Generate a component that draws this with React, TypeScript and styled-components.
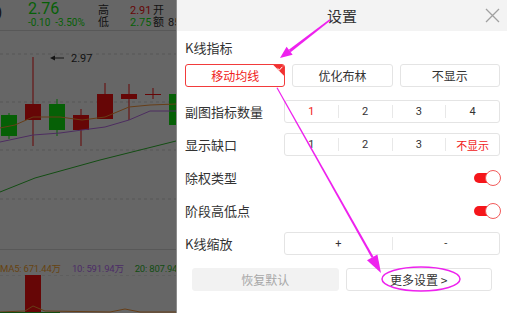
import React from 'react';
import styled, { createGlobalStyle } from 'styled-components';

const GlobalStyle = createGlobalStyle`
  html, body {
    margin: 0;
    padding: 0;
    background: #ffffff;
  }
  body {
    font-family: "Noto Sans CJK SC", "Noto Sans", sans-serif;
  }
`;

const Page = styled.div`
  position: relative;
  display: flex;
  flex-flow: row;
  width: 507px;
  height: 313px;
  overflow: hidden;
`;

/* ---------- chart side ---------- */

const ChartSide = styled.div`
  position: relative;
  width: 176px;
  flex-shrink: 0;
  display: flex;
  flex-flow: column;
  background: #ffffff;
  overflow: hidden;
  font-family: "Roboto", "Noto Sans CJK SC", sans-serif;
`;

const Dim = styled.div`
  position: absolute;
  inset: 0;
  background: rgba(0, 0, 0, 0.6);
`;

const Quote = styled.div`
  height: 31px;
  display: flex;
  flex-flow: row;
  border-bottom: 1px solid #dddddd;
  box-sizing: border-box;
  margin-left: -3px;
`;

const QuoteCol = styled.div<{ $w: number }>`
  width: ${p => p.$w}px;
  flex-shrink: 0;
  display: flex;
  flex-flow: column;
  white-space: nowrap;
`;

const QuoteText = styled.span<{ $color?: string; $size?: number; $h?: number }>`
  color: ${p => p.$color || '#333333'};
  font-size: ${p => p.$size || 11}px;
  line-height: ${p => p.$h || 12}px;
`;

const MainChart = styled.svg`
  display: block;
  width: 176px;
  height: 218px;
`;

const Legend = styled.div`
  height: 26px;
  display: flex;
  flex-flow: row;
  align-items: center;
  gap: 11px;
  padding-top: 10px;
  box-sizing: border-box;
  white-space: nowrap;
  font-size: 9.5px;
  letter-spacing: -0.2px;
  border-top: 1px solid #dddddd;
`;

const LegendItem = styled.span<{ $color: string }>`
  color: ${p => p.$color};
`;

const VolumeChart = styled.svg`
  display: block;
  width: 176px;
  height: 38px;
`;

/* ---------- settings panel ---------- */

const Panel = styled.div`
  width: 331px;
  flex-shrink: 0;
  display: flex;
  flex-flow: column;
  background: #ffffff;
  border-left: 1px solid #8c8c8c;
  box-sizing: border-box;
  color: #333333;
`;

const Header = styled.div`
  position: relative;
  height: 31px;
  background: #f3f3f3;
  display: flex;
  align-items: center;
  justify-content: center;
  font-size: 15px;
  color: #333333;
`;

const Close = styled.svg`
  position: absolute;
  right: 7px;
  top: 8px;
  width: 15px;
  height: 15px;
`;

const Body = styled.div`
  display: flex;
  flex-flow: column;
  padding: 8px 7px 0 8px;
`;

const SectionLabel = styled.div`
  font-size: 13px;
  line-height: 18px;
  height: 18px;
  margin-bottom: 7px;
`;

const ChoiceRow = styled.div`
  display: flex;
  flex-flow: row;
  gap: 7px;
  margin-bottom: 13px;
`;

const Choice = styled.div<{ $active?: boolean }>`
  position: relative;
  flex: 1;
  height: 23px;
  box-sizing: border-box;
  border: 1px solid ${p => (p.$active ? '#f23b3b' : '#e4e4e4')};
  border-radius: 3px;
  display: flex;
  align-items: center;
  justify-content: center;
  font-size: 12px;
  color: ${p => (p.$active ? '#f02020' : '#333333')};
  overflow: hidden;
`;

const Corner = styled.div`
  position: absolute;
  top: 0;
  right: 0;
  width: 11px;
  height: 11px;
  background: #f23030;
  clip-path: polygon(0 0, 100% 0, 100% 100%);
`;

const CornerCheck = styled.svg`
  position: absolute;
  top: 1px;
  right: 1px;
  width: 6px;
  height: 5px;
`;

const SettingRow = styled.div`
  display: flex;
  flex-flow: row;
  align-items: center;
  height: 23px;
  margin-bottom: 10px;
`;

const RowLabel = styled.div`
  width: 99px;
  flex-shrink: 0;
  font-size: 13px;
`;

const Segments = styled.div`
  flex: 1;
  height: 23px;
  box-sizing: border-box;
  border: 1px solid #e4e4e4;
  border-radius: 3px;
  display: flex;
  flex-flow: row;
  align-items: center;
`;

const Segment = styled.div<{ $active?: boolean; $first?: boolean }>`
  flex: 1;
  height: 13px;
  display: flex;
  align-items: center;
  justify-content: center;
  font-size: 11px;
  font-family: "Roboto", "Noto Sans CJK SC", sans-serif;
  color: ${p => (p.$active ? '#f02020' : '#333333')};
  border-left: ${p => (p.$first ? 'none' : '1px solid #e8e8e8')};
`;

const Spacer = styled.div`
  flex: 1;
`;

const Toggle = styled.div`
  position: relative;
  width: 27px;
  height: 16px;
  margin-right: -1px;
`;

const ToggleTrack = styled.div`
  position: absolute;
  left: 0;
  top: 3px;
  width: 22px;
  height: 10px;
  border-radius: 5px;
  background: #f5161b;
`;

const ToggleKnob = styled.div`
  position: absolute;
  right: 0;
  top: 0;
  width: 16px;
  height: 16px;
  box-sizing: border-box;
  border-radius: 50%;
  background: #ffffff;
  border: 1px solid #f25a5a;
`;

const Footer = styled.div`
  display: flex;
  flex-flow: row;
  gap: 7px;
  padding: 3px 15px 0 15px;
  margin-left: -8px;
  margin-right: -7px;
`;

const FooterButton = styled.div<{ $muted?: boolean }>`
  flex: 1;
  height: 23px;
  box-sizing: border-box;
  border-radius: 3px;
  border: 1px solid ${p => (p.$muted ? '#f2f2f2' : '#e4e4e4')};
  background: ${p => (p.$muted ? '#f2f2f2' : '#ffffff')};
  color: ${p => (p.$muted ? '#a8a8a8' : '#333333')};
  font-size: 12px;
  display: flex;
  align-items: center;
  justify-content: center;
`;

const Annotations = styled.svg`
  position: absolute;
  left: 0;
  top: 0;
  width: 507px;
  height: 313px;
  pointer-events: none;
`;

/* ---------- data ---------- */

const RED = '#ff1010';
const GREEN = '#10f010';

const candles = [
  { x: 1, top: 115, bottom: 136, hi: 113, lo: 139, c: GREEN },
  { x: 25, top: 104, bottom: 120, hi: 57, lo: 146, c: RED },
  { x: 49, top: 104, bottom: 130, hi: 99, lo: 136, c: GREEN },
  { x: 73, top: 115, bottom: 130, hi: 109, lo: 146, c: RED },
  { x: 97, top: 94, bottom: 119, hi: 83, lo: 119, c: RED },
  { x: 121, top: 94, bottom: 99, hi: 84, lo: 120, c: RED },
  { x: 145, top: 94, bottom: 95, hi: 88, lo: 99, c: RED },
  { x: 169, top: 94, bottom: 125, hi: 94, lo: 125, c: GREEN },
];

const ma5 = '0,128 15,125 33,117 60,117 82,120 105,117 129,107 150,105 176,104';
const ma10 = '0,142 33,135 60,133 82,130 105,127 129,120 150,111 176,111';
const ma20 = '0,192 35,178 100,160 140,150 176,141';

const Chart = () => (
  <ChartSide>
    <Quote>
      <QuoteCol $w={31}>
        <QuoteText $size={15} $h={24}>)</QuoteText>
      </QuoteCol>
      <QuoteCol $w={70}>
        <QuoteText $color={GREEN} $size={16} $h={17}>2.76</QuoteText>
        <QuoteText $color={GREEN} $size={10} $h={12}>-0.10&nbsp;&nbsp;-3.50%</QuoteText>
      </QuoteCol>
      <QuoteCol $w={32}>
        <QuoteText $h={12} style={{ marginTop: 5 }}>高</QuoteText>
        <QuoteText $h={12}>低</QuoteText>
      </QuoteCol>
      <QuoteCol $w={23}>
        <QuoteText $color={RED} $h={12} style={{ marginTop: 5 }}>2.91</QuoteText>
        <QuoteText $color={GREEN} $h={12}>2.75</QuoteText>
      </QuoteCol>
      <QuoteCol $w={15}>
        <QuoteText $h={12} style={{ marginTop: 5 }}>开</QuoteText>
        <QuoteText $h={12}>额</QuoteText>
      </QuoteCol>
      <QuoteCol $w={20}>
        <QuoteText $h={12} style={{ marginTop: 17 }}>85</QuoteText>
      </QuoteCol>
    </Quote>
    <MainChart viewBox="0 31 176 218">
      {[54, 102, 150, 199].map(y => (
        <line key={y} x1={0} x2={176} y1={y} y2={y} stroke="#d8d8d8" strokeWidth={1} strokeDasharray="3 3" />
      ))}
      <line x1={52} x2={64} y1={58} y2={58} stroke="#333" strokeWidth={1} />
      <path d="M50 58 L55 55.5 L55 60.5 Z" fill="#333" />
      <text x={71} y={62} fontSize={11} fill="#333" fontFamily="Roboto, sans-serif">2.97</text>
      {candles.map((k, i) => (
        <g key={i}>
          <line x1={k.x + 8} x2={k.x + 8} y1={k.hi} y2={k.lo} stroke={k.c} strokeWidth={1} />
          <rect x={k.x} y={k.top} width={16} height={Math.max(1, k.bottom - k.top)} fill={k.c} />
        </g>
      ))}
      <polyline points={ma5} fill="none" stroke="#ff9a3a" strokeWidth={1} />
      <polyline points={ma10} fill="none" stroke="#c070f0" strokeWidth={1} />
      <polyline points={ma20} fill="none" stroke="#30c030" strokeWidth={1} />
    </MainChart>
    <Legend>
      <LegendItem $color="#ffaa30">MA5: 671.44万</LegendItem>
      <LegendItem $color="#c070ff">10: 591.94万</LegendItem>
      <LegendItem $color="#30c030">20: 807.94万</LegendItem>
    </Legend>
    <VolumeChart viewBox="0 275 176 38">
      <line x1={0} x2={176} y1={275} y2={275} stroke="#d8d8d8" strokeDasharray="3 3" />
      <rect x={25} y={275} width={16} height={38} fill={RED} />
      <polyline points="0,312 25,311 33,306 45,311 110,312 125,309 140,312 176,312" fill="none" stroke="#ff9a3a" strokeWidth={1} />
      <polyline points="0,312.5 60,312.5" fill="none" stroke="#30c030" strokeWidth={1} />
    </VolumeChart>
    <Dim />
  </ChartSide>
);

const Switch = () => (
  <Toggle>
    <ToggleTrack />
    <ToggleKnob />
  </Toggle>
);

const App = () => {
  return (
    <Page>
      <GlobalStyle />
      <Chart />
      <Panel>
        <Header>
          设置
          <Close viewBox="0 0 15 15">
            <path d="M1 1 L14 14 M14 1 L1 14" stroke="#a0a0a0" strokeWidth={1.3} fill="none" />
          </Close>
        </Header>
        <Body>
          <SectionLabel>K线指标</SectionLabel>
          <ChoiceRow>
            <Choice $active>
              移动均线
              <Corner />
              <CornerCheck viewBox="0 0 6 5">
                <path d="M0.6 2.4 L2.4 4 L5.4 0.8" stroke="#fff" strokeWidth={1} fill="none" />
              </CornerCheck>
            </Choice>
            <Choice>优化布林</Choice>
            <Choice>不显示</Choice>
          </ChoiceRow>
          <SettingRow>
            <RowLabel>副图指标数量</RowLabel>
            <Segments>
              <Segment $first $active>1</Segment>
              <Segment>2</Segment>
              <Segment>3</Segment>
              <Segment>4</Segment>
            </Segments>
          </SettingRow>
          <SettingRow>
            <RowLabel>显示缺口</RowLabel>
            <Segments>
              <Segment $first>1</Segment>
              <Segment>2</Segment>
              <Segment>3</Segment>
              <Segment $active>不显示</Segment>
            </Segments>
          </SettingRow>
          <SettingRow>
            <RowLabel>除权类型</RowLabel>
            <Spacer />
            <Switch />
          </SettingRow>
          <SettingRow>
            <RowLabel>阶段高低点</RowLabel>
            <Spacer />
            <Switch />
          </SettingRow>
          <SettingRow>
            <RowLabel>K线缩放</RowLabel>
            <Segments>
              <Segment $first>+</Segment>
              <Segment>-</Segment>
            </Segments>
          </SettingRow>
          <Footer>
            <FooterButton $muted>恢复默认</FooterButton>
            <FooterButton>更多设置 &gt;</FooterButton>
          </Footer>
        </Body>
      </Panel>
      <Annotations viewBox="0 0 507 313">
        <polygon points="330.5,20.5 329.5,19.2 288.8,49.8 290.6,52.2" fill="#ee22ee" />
        <polygon points="280,58 286.6,46.7 292.6,54.7" fill="#ee22ee" />
        <polygon points="277.5,87.5 276.5,88 371.5,257.8 373.5,256.8" fill="#ee22ee" />
        <polygon points="381,273 367,260.2 377.4,254.4" fill="#ee22ee" />
        <ellipse cx={421} cy={279} rx={39} ry={12} fill="none" stroke="#ee22ee" strokeWidth={1.5} />
      </Annotations>
    </Page>
  );
};

export default App;
